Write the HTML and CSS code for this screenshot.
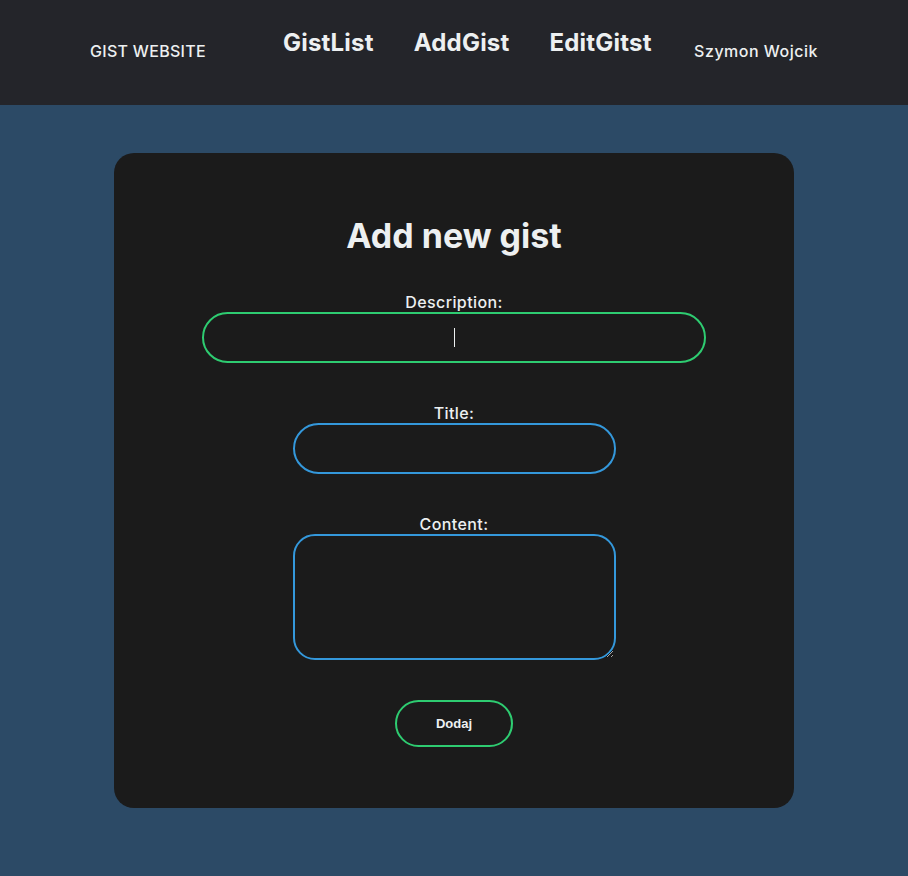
FILE: index.html
```html
<!DOCTYPE html>
<html lang="en">
<head>
<meta charset="utf-8">
<title>Gist Website</title>
<link rel="stylesheet" href="styles.css">
</head>
<body>
<header class="topbar">
  <div class="logo">GIST WEBSITE</div>
  <nav class="nav">
    <a class="nav-link" href="#">GistList</a>
    <a class="nav-link" href="#">AddGist</a>
    <a class="nav-link" href="#">EditGitst</a>
  </nav>
  <div class="user">Szymon Wojcik</div>
</header>
<main class="card">
  <h1 class="card-title">Add new gist</h1>
  <form class="form">
    <label class="field">
      <span class="field-label">Description:</span>
      <span class="input-wrap">
        <input class="input input-wide input-active" type="text">
        <span class="caret"></span>
      </span>
    </label>
    <label class="field">
      <span class="field-label">Title:</span>
      <input class="input input-narrow" type="text">
    </label>
    <label class="field">
      <span class="field-label">Content:</span>
      <textarea class="textarea"></textarea>
    </label>
    <button class="submit" type="button">Dodaj</button>
  </form>
</main>
</body>
</html>
```
FILE: styles.css
```css
* { box-sizing: border-box; }
html, body {
  margin: 0;
  padding: 0;
}
body {
  background: #2c4a66;
  font-family: "Inter", "Noto Sans", sans-serif;
  color: #edf0f1;
  min-height: 876px;
}
.topbar {
  height: 105px;
  background: #24252a;
  display: flex;
  align-items: center;
  padding: 0 90px;
}
.logo {
  font-size: 16px;
  font-weight: 500;
  letter-spacing: 0.3px;
  margin-bottom: 4px;
  width: 173px;
}
.nav {
  display: flex;
  margin-bottom: 21px;
}
.nav-link {
  color: #edf0f1;
  text-decoration: none;
  font-size: 24px;
  font-weight: 700;
  padding: 0 20px;
  letter-spacing: 0.2px;
}
.user {
  margin-left: auto;
  margin-bottom: 4px;
  font-size: 16px;
  font-weight: 500;
  letter-spacing: 0.5px;
}
.card {
  width: 680px;
  margin: 48px auto 0;
  background: #1b1b1b;
  border-radius: 20px;
  padding: 63px 0 61px;
  display: flex;
  flex-direction: column;
  align-items: center;
}
.card-title {
  margin: 0 0 36px;
  font-size: 34px;
  font-weight: 700;
  line-height: 40px;
  letter-spacing: 0;
}
.form {
  display: flex;
  flex-direction: column;
  align-items: center;
  width: 100%;
}
.field {
  display: flex;
  flex-direction: column;
  align-items: center;
  margin-bottom: 40px;
}
.field-label {
  font-size: 16px;
  font-weight: 500;
  line-height: 20px;
  letter-spacing: 0.4px;
}
.input-wrap {
  position: relative;
  display: block;
}
.input {
  display: block;
  height: 51px;
  border-radius: 26px;
  border: 2px solid #3498db;
  background: #1b1b1b;
  color: #edf0f1;
  outline: none;
  text-align: center;
  font-size: 16px;
}
.input-wide { width: 504px; }
.input-narrow { width: 323px; }
.input-active { border-color: #2ecc71; }
.caret {
  position: absolute;
  left: 252px;
  top: 16px;
  width: 1px;
  height: 19px;
  background: #edf0f1;
}
.textarea {
  display: block;
  width: 323px;
  height: 126px;
  border-radius: 22px;
  border: 2px solid #3498db;
  background: #1b1b1b;
  color: #edf0f1;
  outline: none;
  resize: both;
}
.submit {
  width: 118px;
  height: 47px;
  border-radius: 24px;
  border: 2px solid #2ecc71;
  background: #1b1b1b;
  color: #edf0f1;
  font-family: "Liberation Sans", Arial, sans-serif;
  font-weight: 700;
  font-size: 13px;
}
```
